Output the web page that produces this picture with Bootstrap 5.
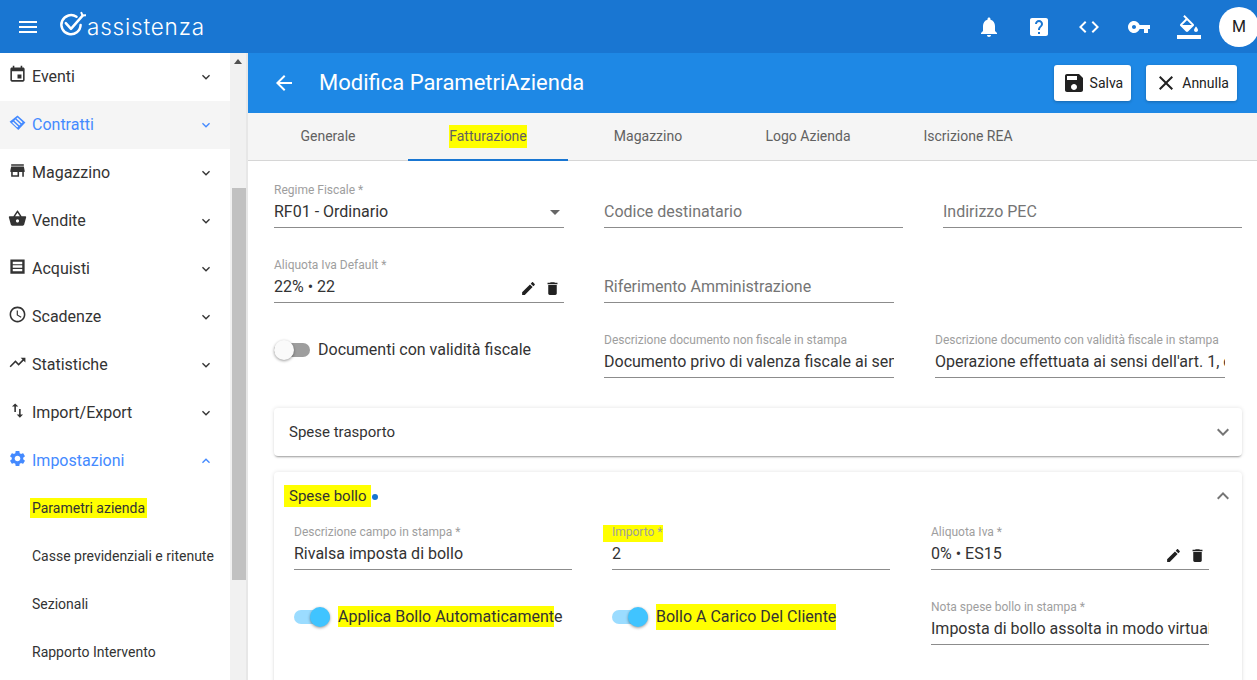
<!DOCTYPE html>
<html lang="it">
<head>
    <meta charset="UTF-8">
    <title>Modifica ParametriAzienda</title>
    <link href="https://cdn.jsdelivr.net/npm/bootstrap@5.3.0/dist/css/bootstrap.min.css" rel="stylesheet">
    <style>
        html, body { height: 680px; overflow: hidden; }
        body { font-family: Roboto, "Liberation Sans", sans-serif; color: #212121; background: #fff; font-size: 16px; }
        svg.ico { fill: currentColor; display: block; flex: none; }

        .topbar { height: 53px; background: #1976d2; color: #fff; padding: 0 0 0 16px; }
        .logo-mark { margin: 0 0 6px 18px; flex: none; }
        .logo-text { font-family: Inter, sans-serif; font-weight: 300; font-size: 22.5px; letter-spacing: .8px; line-height: 1; margin-left: 1px; margin-top: 1px; }
        .top-btn { width: 50px; display: flex; justify-content: center; }
        .avatar { width: 40px; height: 40px; border-radius: 50%; background: #fff; color: #212121; font-size: 16px; margin: 0 -2px 0 5px; }

        .shell { height: 627px; }
        .side { width: 230px; flex: none; overflow: hidden; }
        .menu-item { height: 48px; padding: 0 16px 0 8px; border: 0; font-size: 16px; color: #333; background: #fff; }
        .menu-item.on { color: #448aff; }
        .menu-item.hover { background: #f5f5f5; }
        .menu-item .lbl { margin-left: 5px; flex: 1; }
        .menu-item .m-ico { margin-bottom: 6px; }
        .menu-sub { padding: 0 0 2px 32px; font-size: 14px; white-space: nowrap; }
        .menu-sub .lbl { margin-left: 0; }
        .sbar { width: 16px; flex: none; background: #f1f1f1; padding-top: 135px; }
        .sbar-up { position: absolute; width: 0; height: 0; margin: -129px 0 0 4px; border: 4px solid transparent; border-bottom: 5px solid #505050; border-top: 0; }
        .sbar-thumb { height: 392px; background: #c1c1c1; margin-left: 2px; }

        .main { flex: 1; min-width: 0; border-left: 2px solid #e7e7e7; overflow: hidden; }
        .tool { height: 60px; background: #1e88e5; color: #fff; padding: 0 20px 0 24px; }
        .tool h1 { font-size: 22px; font-weight: 400; margin: 0 0 0 23px; flex: 1; }
        .tool-btn { height: 36px; padding: 0 8px; font-size: 14px; color: #212121; background: #fff; border: 0; border-radius: 3px; gap: 4px; box-shadow: 0 1px 3px rgba(0,0,0,.25); }
        .tool-btn + .tool-btn { margin-left: 15px; }

        .tabs-bar { height: 48px; background: #f5f5f5; border-bottom: 1px solid #d6d6d6; }
        .tabs-bar .nav-link { width: 160px; height: 48px; padding: 0; color: #616161; font-size: 14px; border-bottom: 2px solid transparent; border-radius: 0; display: flex; align-items: center; justify-content: center; }
        .tabs-bar .nav-link.active { color: #616161; border-bottom-color: #1976d2; }

        .form-area { padding: 19px 15px 0 26px; }
        .frow { display: flex; height: 75px; }
        .fld { width: 290px; margin-right: 40px; flex: none; position: relative; }
        .fld.wide { width: 299px; }
        .fld.last { margin-right: 0; }
        .fld.third { margin-left: 1px; }
        .fld-lbl { height: 20px; font-size: 12px; line-height: 20px; color: #9e9e9e; white-space: nowrap; }
        .fld-val { height: 28px; border-bottom: 1px solid #8c8c8c; font-size: 16px; line-height: 24px; white-space: nowrap; overflow: hidden; display: flex; align-items: flex-start; }
        .fld-val .txt { flex: 1; overflow: hidden; color: #333; }
        .fld-val.empty .txt { color: #757575; }
        .fld-val .ico { margin: 5px 7px 0 0; color: #212121; }
        .fld-val .ico:last-child { margin-right: 3px; }
        .caret-dn { width: 0; height: 0; border: 5px solid transparent; border-top: 5px solid #666; border-bottom: 0; margin: 10px 4px 0 0; }

        .toggle { display: flex; align-items: center; height: 28px; margin-top: 6px; font-size: 16px; color: #333; white-space: nowrap; }
        .tg { width: 36px; height: 14px; border-radius: 7px; background: #9e9e9e; position: relative; margin-right: 8px; flex: none; }
        .tg::after { content: ""; position: absolute; top: -3px; left: 0; width: 20px; height: 20px; border-radius: 50%; background: #fafafa; box-shadow: 0 1px 3px rgba(0,0,0,.4); }
        .tg.yes { background: #9bdcff; }
        .tg.yes::after { left: 16px; background: #40c4ff; }

        .panel { border: 0; border-radius: 4px; box-shadow: 0 2px 2px -1px rgba(0,0,0,.35), 0 0 4px rgba(0,0,0,.12); margin-top: 3px; }
        .panel-head { height: 48px; padding: 0 7px 0 15px; font-size: 15px; color: #333; }
        .panel-body { padding: 2px 20px 0 20px; height: 300px; }
        .panel-body .fld { width: 278px; }
        .panel + .panel { margin-top: 16px; }
        .chev { color: #757575; }
        .dot { width: 6px; height: 6px; border-radius: 50%; background: #1976d2; margin-left: 1px; margin-top: 1px; }
        .hl { background: #ffff00; }
        .hl-tab { padding: 1px 0; }
        .hl-side { padding: 2px 2px; margin-left: -2px; }
        .hl-head { padding: 0 4px 0 5px; margin-left: -5px; }
        .hl-lbl { padding: 0 0 3px 9px; margin-left: -9px; }
        .hl-tog { padding: 1px 0; }
    </style>
</head>
<body>
    <svg width="0" height="0" class="position-absolute">
        <symbol id="i-menu" viewBox="0 0 24 24"><path d="M3 18h18v-2H3v2zm0-5h18v-2H3v2zm0-7v2h18V6H3z"/></symbol>
        <symbol id="i-bell" viewBox="0 0 24 24"><path d="M12 22c1.1 0 2-.9 2-2h-4c0 1.1.89 2 2 2zm6-6v-5c0-3.07-1.64-5.64-4.5-6.32V4c0-.83-.67-1.5-1.5-1.5s-1.5.67-1.5 1.5v.68C7.63 5.36 6 7.92 6 11v5l-2 2v1h16v-1l-2-2z"/></symbol>
        <symbol id="i-help" viewBox="0 0 24 24"><path d="M19 3H5c-1.1 0-2 .9-2 2v14c0 1.1.9 2 2 2h14c1.1 0 2-.9 2-2V5c0-1.1-.9-2-2-2zm-6 16h-2v-2h2v2zm2.07-7.75l-.9.92C13.45 12.9 13 13.5 13 15h-2v-.5c0-1.1.45-2.1 1.17-2.83l1.24-1.26c.37-.36.59-.86.59-1.41 0-1.1-.9-2-2-2s-2 .9-2 2H8c0-2.21 1.79-4 4-4s4 1.79 4 4c0 .88-.36 1.68-.93 2.25z"/></symbol>
        <symbol id="i-code" viewBox="0 0 24 24"><path d="M9.4 16.6L4.8 12l4.6-4.6L8 6l-6 6 6 6 1.4-1.4zm5.2 0l4.6-4.6-4.6-4.6L16 6l6 6-6 6-1.4-1.4z"/></symbol>
        <symbol id="i-key" viewBox="0 0 24 24"><path d="M12.65 10C11.83 7.67 9.61 6 7 6c-3.31 0-6 2.69-6 6s2.69 6 6 6c2.61 0 4.83-1.67 5.65-4H17v4h4v-4h2v-4H12.65zM7 14c-1.1 0-2-.9-2-2s.9-2 2-2 2 .9 2 2-.9 2-2 2z"/></symbol>
        <symbol id="i-fill" viewBox="0 0 24 24"><path d="M16.56 8.94L7.62 0 6.21 1.41l2.38 2.38-5.15 5.15c-.59.59-.59 1.54 0 2.12l5.5 5.5c.29.29.68.44 1.06.44s.77-.15 1.06-.44l5.5-5.5c.59-.58.59-1.53 0-2.12zM5.21 10L10 5.21 14.79 10H5.21zM19 11.5s-2 2.17-2 3.5c0 1.1.9 2 2 2s2-.9 2-2c0-1.33-2-3.5-2-3.5zM0 20h24v4H0z"/></symbol>
        <symbol id="i-event" viewBox="0 0 24 24"><path d="M17 12h-5v5h5v-5zM16 1v2H8V1H6v2H5c-1.11 0-1.99.9-1.99 2L3 19c0 1.1.89 2 2 2h14c1.1 0 2-.9 2-2V5c0-1.1-.9-2-2-2h-1V1h-2zm3 18H5V8h14v11z"/></symbol>
        <symbol id="i-deal" viewBox="0 0 24 24"><path fill-rule="evenodd" d="M12 3l10 9-9 9.5L2 11zM12 5.6L10.6 7 17 13l1.4-1.4zM9.3 8.3L7.9 9.7l6.4 6 1.4-1.4zM6.6 11L5.2 12.4l6.4 6 1.4-1.4z"/></symbol>
        <symbol id="i-store" viewBox="0 0 24 24"><path d="M20 4H4v2h16V4zm1 10v-2l-1-5H4l-1 5v2h1v6h10v-6h4v6h2v-6h1zm-9 4H6v-4h6v4z"/></symbol>
        <symbol id="i-basket" viewBox="0 0 24 24"><path d="M17.21 9l-4.38-6.56c-.19-.28-.51-.42-.83-.42-.32 0-.64.14-.83.43L6.79 9H2c-.55 0-1 .45-1 1 0 .09.01.18.04.27l2.54 9.27c.23.84 1 1.46 1.92 1.46h13c.92 0 1.69-.62 1.93-1.46l2.54-9.27L23 10c0-.55-.45-1-1-1h-4.79zM9 9l3-4.4L15 9H9zm3 8c-1.1 0-2-.9-2-2s.9-2 2-2 2 .9 2 2-.9 2-2 2z"/></symbol>
        <symbol id="i-list" viewBox="0 0 24 24"><path fill-rule="evenodd" d="M3 3h18v18H3zM6 6v3h12V6zM6 10.5v3h12v-3zM6 15v3h12v-3z"/></symbol>
        <symbol id="i-clock" viewBox="0 0 24 24"><path d="M11.99 2C6.47 2 2 6.48 2 12s4.47 10 9.99 10C17.52 22 22 17.52 22 12S17.52 2 11.99 2zM12 20c-4.42 0-8-3.58-8-8s3.58-8 8-8 8 3.58 8 8-3.58 8-8 8zm.5-13H11v6l5.25 3.15.75-1.23-4.5-2.67z"/></symbol>
        <symbol id="i-trend" viewBox="0 0 24 24"><path d="M16 6l2.29 2.29-4.88 4.88-4-4L2 16.59 3.41 18l6-6 4 4 6.3-6.29L22 12V6z"/></symbol>
        <symbol id="i-impexp" viewBox="0 0 24 24"><path d="M9 3L5 7h3v7h2V7h3L9 3zm7 14v-7h-2v7h-3l4 4 4-4h-3z"/></symbol>
        <symbol id="i-gear" viewBox="0 0 24 24"><path d="M19.14 12.94c.04-.3.06-.61.06-.94 0-.32-.02-.64-.07-.94l2.03-1.58c.18-.14.23-.41.12-.61l-1.92-3.32c-.12-.22-.37-.29-.59-.22l-2.39.96c-.5-.38-1.03-.7-1.62-.94l-.36-2.54c-.04-.24-.24-.41-.48-.41h-3.84c-.24 0-.43.17-.47.41l-.36 2.54c-.59.24-1.13.57-1.62.94l-2.39-.96c-.22-.08-.47 0-.59.22L2.74 8.87c-.12.21-.08.47.12.61l2.03 1.58c-.05.3-.09.63-.09.94s.02.64.07.94l-2.03 1.58c-.18.14-.23.41-.12.61l1.92 3.32c.12.22.37.29.59.22l2.39-.96c.5.38 1.03.7 1.62.94l.36 2.54c.05.24.24.41.48.41h3.84c.24 0 .44-.17.47-.41l.36-2.54c.59-.24 1.13-.56 1.62-.94l2.39.96c.22.08.47 0 .59-.22l1.92-3.32c.12-.22.07-.47-.12-.61l-2.01-1.58zM12 15.6c-1.98 0-3.6-1.62-3.6-3.6s1.62-3.6 3.6-3.6 3.6 1.62 3.6 3.6-1.62 3.6-3.6 3.6z"/></symbol>
        <symbol id="i-down" viewBox="0 0 24 24"><path d="M16.59 8.59L12 13.17 7.41 8.59 6 10l6 6 6-6z"/></symbol>
        <symbol id="i-up" viewBox="0 0 24 24"><path d="M12 8l-6 6 1.41 1.41L12 10.83l4.59 4.58L18 14z"/></symbol>
        <symbol id="i-back" viewBox="0 0 24 24"><path d="M20 11H7.83l5.59-5.59L12 4l-8 8 8 8 1.41-1.41L7.83 13H20v-2z"/></symbol>
        <symbol id="i-save" viewBox="0 0 24 24"><path d="M17 3H5c-1.11 0-2 .9-2 2v14c0 1.1.89 2 2 2h14c1.1 0 2-.9 2-2V7l-4-4zm-5 16c-1.66 0-3-1.34-3-3s1.34-3 3-3 3 1.34 3 3-1.34 3-3 3zm3-10H5V5h10v4z"/></symbol>
        <symbol id="i-close" viewBox="0 0 24 24"><path d="M19 6.41L17.59 5 12 10.59 6.41 5 5 6.41 10.59 12 5 17.59 6.41 19 12 13.41 17.59 19 19 17.59 13.41 12z"/></symbol>
        <symbol id="i-edit" viewBox="0 0 24 24"><path d="M3 17.25V21h3.75L17.81 9.94l-3.75-3.75L3 17.25zM20.71 7.04c.39-.39.39-1.02 0-1.41l-2.34-2.34c-.39-.39-1.02-.39-1.41 0l-1.83 1.83 3.75 3.75 1.83-1.83z"/></symbol>
        <symbol id="i-del" viewBox="0 0 24 24"><path d="M6 19c0 1.1.9 2 2 2h8c1.1 0 2-.9 2-2V7H6v12zM19 4h-3.5l-1-1h-5l-1 1H5v2h14V4z"/></symbol>
    </svg>

    <!-- Barra superiore -->
    <header class="topbar d-flex align-items-center">
        <svg class="ico" width="24" height="24"><use href="#i-menu"/></svg>
        <svg class="logo-mark" width="28" height="26" viewBox="0 0 28 26" fill="none" stroke="#fff" stroke-width="2.5" stroke-linecap="round" stroke-linejoin="round">
            <path d="M18.5 5.8A9.6 9.6 0 1 0 22.6 14"/>
            <path d="M7.8 12.2l5.2 5.6L24.6 4.6"/>
            <path d="M23.4 1.8l1.2 2.8 3-.3" stroke-width="2"/>
        </svg>
        <span class="logo-text">assistenza</span>
        <div class="d-flex align-items-center ms-auto">
            <span class="top-btn"><svg class="ico" width="24" height="24"><use href="#i-bell"/></svg></span>
            <span class="top-btn"><svg class="ico" width="24" height="24"><use href="#i-help"/></svg></span>
            <span class="top-btn"><svg class="ico" width="24" height="24"><use href="#i-code"/></svg></span>
            <span class="top-btn"><svg class="ico" width="24" height="24"><use href="#i-key"/></svg></span>
            <span class="top-btn"><svg class="ico" width="24" height="24"><use href="#i-fill"/></svg></span>
            <span class="avatar d-flex align-items-center justify-content-center">M</span>
        </div>
    </header>

    <div class="shell d-flex">
        <!-- Menu laterale -->
        <nav class="side list-group list-group-flush rounded-0">
            <a class="menu-item list-group-item d-flex align-items-center"><svg class="ico m-ico" width="19" height="19"><use href="#i-event"/></svg><span class="lbl">Eventi</span><svg class="ico" width="16" height="16"><use href="#i-down"/></svg></a>
            <a class="menu-item list-group-item d-flex align-items-center on hover"><svg class="ico m-ico" width="19" height="19"><use href="#i-deal"/></svg><span class="lbl">Contratti</span><svg class="ico" width="16" height="16"><use href="#i-down"/></svg></a>
            <a class="menu-item list-group-item d-flex align-items-center"><svg class="ico m-ico" width="19" height="19"><use href="#i-store"/></svg><span class="lbl">Magazzino</span><svg class="ico" width="16" height="16"><use href="#i-down"/></svg></a>
            <a class="menu-item list-group-item d-flex align-items-center"><svg class="ico m-ico" width="19" height="19"><use href="#i-basket"/></svg><span class="lbl">Vendite</span><svg class="ico" width="16" height="16"><use href="#i-down"/></svg></a>
            <a class="menu-item list-group-item d-flex align-items-center"><svg class="ico m-ico" width="19" height="19"><use href="#i-list"/></svg><span class="lbl">Acquisti</span><svg class="ico" width="16" height="16"><use href="#i-down"/></svg></a>
            <a class="menu-item list-group-item d-flex align-items-center"><svg class="ico m-ico" width="19" height="19"><use href="#i-clock"/></svg><span class="lbl">Scadenze</span><svg class="ico" width="16" height="16"><use href="#i-down"/></svg></a>
            <a class="menu-item list-group-item d-flex align-items-center"><svg class="ico m-ico" width="19" height="19"><use href="#i-trend"/></svg><span class="lbl">Statistiche</span><svg class="ico" width="16" height="16"><use href="#i-down"/></svg></a>
            <a class="menu-item list-group-item d-flex align-items-center"><svg class="ico m-ico" width="19" height="19"><use href="#i-impexp"/></svg><span class="lbl">Import/Export</span><svg class="ico" width="16" height="16"><use href="#i-down"/></svg></a>
            <a class="menu-item list-group-item d-flex align-items-center on"><svg class="ico m-ico" width="19" height="19"><use href="#i-gear"/></svg><span class="lbl">Impostazioni</span><svg class="ico" width="16" height="16"><use href="#i-up"/></svg></a>
            <a class="menu-item menu-sub list-group-item d-flex align-items-center"><span class="lbl"><span class="hl hl-side">Parametri azienda</span></span></a>
            <a class="menu-item menu-sub list-group-item d-flex align-items-center"><span class="lbl">Casse previdenziali e ritenute</span></a>
            <a class="menu-item menu-sub list-group-item d-flex align-items-center"><span class="lbl">Sezionali</span></a>
            <a class="menu-item menu-sub list-group-item d-flex align-items-center"><span class="lbl">Rapporto Intervento</span></a>
        </nav>
        <div class="sbar"><div class="sbar-up"></div><div class="sbar-thumb"></div></div>

        <main class="main">
            <div class="tool d-flex align-items-center">
                <svg class="ico" width="24" height="24"><use href="#i-back"/></svg>
                <h1>Modifica ParametriAzienda</h1>
                <button class="btn tool-btn d-flex align-items-center"><svg class="ico" width="24" height="24"><use href="#i-save"/></svg>Salva</button>
                <button class="btn tool-btn d-flex align-items-center"><svg class="ico" width="24" height="24"><use href="#i-close"/></svg>Annulla</button>
            </div>

            <ul class="tabs-bar nav">
                <li class="nav-item"><a class="nav-link">Generale</a></li>
                <li class="nav-item"><a class="nav-link active"><span class="hl hl-tab">Fatturazione</span></a></li>
                <li class="nav-item"><a class="nav-link">Magazzino</a></li>
                <li class="nav-item"><a class="nav-link">Logo Azienda</a></li>
                <li class="nav-item"><a class="nav-link">Iscrizione REA</a></li>
            </ul>

            <div class="form-area">
                <div class="frow">
                    <div class="fld">
                        <div class="fld-lbl">Regime Fiscale *</div>
                        <div class="fld-val"><span class="txt">RF01 - Ordinario</span><span class="caret-dn"></span></div>
                    </div>
                    <div class="fld wide">
                        <div class="fld-lbl"></div>
                        <div class="fld-val empty"><span class="txt">Codice destinatario</span></div>
                    </div>
                    <div class="fld wide last">
                        <div class="fld-lbl"></div>
                        <div class="fld-val empty"><span class="txt">Indirizzo PEC</span></div>
                    </div>
                </div>
                <div class="frow">
                    <div class="fld">
                        <div class="fld-lbl">Aliquota Iva Default *</div>
                        <div class="fld-val"><span class="txt">22% • 22</span><svg class="ico" width="17" height="17"><use href="#i-edit"/></svg><svg class="ico" width="17" height="17"><use href="#i-del"/></svg></div>
                    </div>
                    <div class="fld">
                        <div class="fld-lbl"></div>
                        <div class="fld-val empty"><span class="txt">Riferimento Amministrazione</span></div>
                    </div>
                </div>
                <div class="frow">
                    <div class="fld">
                        <div class="toggle"><span class="tg"></span>Documenti con validità fiscale</div>
                    </div>
                    <div class="fld">
                        <div class="fld-lbl">Descrizione documento non fiscale in stampa</div>
                        <div class="fld-val"><span class="txt">Documento privo di valenza fiscale ai sen</span></div>
                    </div>
                    <div class="fld third last">
                        <div class="fld-lbl">Descrizione documento con validità fiscale in stampa</div>
                        <div class="fld-val"><span class="txt">Operazione effettuata ai sensi dell'art. 1, c</span></div>
                    </div>
                </div>

                <div class="panel card">
                    <div class="panel-head d-flex align-items-center justify-content-between">Spese trasporto<svg class="ico chev" width="24" height="24"><use href="#i-down"/></svg></div>
                </div>

                <div class="panel card">
                    <div class="panel-head d-flex align-items-center"><span class="hl hl-head">Spese bollo</span><span class="dot"></span><svg class="ico chev ms-auto" width="24" height="24"><use href="#i-up"/></svg></div>
                    <div class="panel-body">
                        <div class="frow">
                            <div class="fld">
                                <div class="fld-lbl">Descrizione campo in stampa *</div>
                                <div class="fld-val"><span class="txt">Rivalsa imposta di bollo</span></div>
                            </div>
                            <div class="fld">
                                <div class="fld-lbl"><span class="hl hl-lbl">Importo *</span></div>
                                <div class="fld-val"><span class="txt">2</span></div>
                            </div>
                            <div class="fld third last">
                                <div class="fld-lbl">Aliquota Iva *</div>
                                <div class="fld-val"><span class="txt">0% • ES15</span><svg class="ico" width="17" height="17"><use href="#i-edit"/></svg><svg class="ico" width="17" height="17"><use href="#i-del"/></svg></div>
                            </div>
                        </div>
                        <div class="frow">
                            <div class="fld">
                                <div class="toggle"><span class="tg yes"></span><span><span class="hl hl-tog">Applica Bollo Automaticament</span>e</span></div>
                            </div>
                            <div class="fld">
                                <div class="toggle"><span class="tg yes"></span><span class="hl hl-tog">Bollo A Carico Del Cliente</span></div>
                            </div>
                            <div class="fld third last">
                                <div class="fld-lbl">Nota spese bollo in stampa *</div>
                                <div class="fld-val"><span class="txt">Imposta di bollo assolta in modo virtual</span></div>
                            </div>
                        </div>
                    </div>
                </div>
            </div>
        </main>
    </div>
</body>
</html>
